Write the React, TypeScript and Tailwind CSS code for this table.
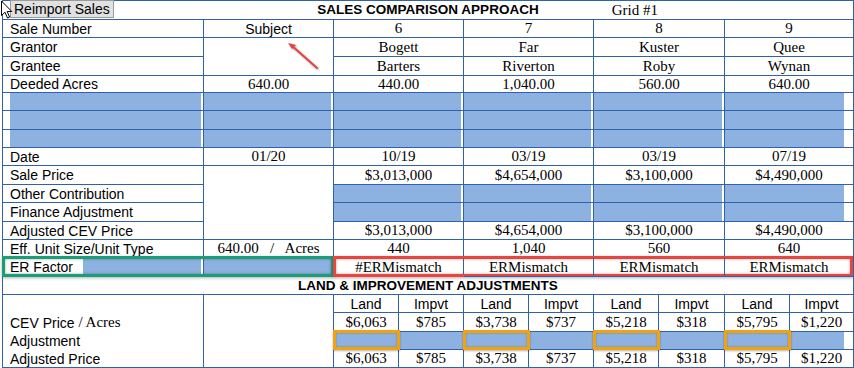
import React from 'react';

const arial = "font-['Liberation_Sans',Arial,sans-serif]";
const times = "font-['Liberation_Serif','Times_New_Roman',serif]";
const line = 'border-[#3062ab]';
const fill = 'bg-[#8db1e0]';

type Comp = {
    n: string; grantor: string; grantee: string; acres: string; date: string;
    price: string; eff: string; er: string; land: string; impvt: string;
};

const comps: Comp[] = [
    { n: '6', grantor: 'Bogett', grantee: 'Barters', acres: '440.00', date: '10/19', price: '$3,013,000', eff: '440', er: '#ERMismatch', land: '$6,063', impvt: '$785' },
    { n: '7', grantor: 'Far', grantee: 'Riverton', acres: '1,040.00', date: '03/19', price: '$4,654,000', eff: '1,040', er: 'ERMismatch', land: '$3,738', impvt: '$737' },
    { n: '8', grantor: 'Kuster', grantee: 'Roby', acres: '560.00', date: '03/19', price: '$3,100,000', eff: '560', er: 'ERMismatch', land: '$5,218', impvt: '$318' },
    { n: '9', grantor: 'Quee', grantee: 'Wynan', acres: '640.00', date: '07/19', price: '$4,490,000', eff: '640', er: 'ERMismatch', land: '$5,795', impvt: '$1,220' },
];

const Label = ({ children, bottom = true }: { children?: React.ReactNode; bottom?: boolean }) => (
    <div className={`border-r ${bottom ? 'border-b' : ''} ${line} flex items-center pl-[7px] text-[14px] leading-none ${arial}`}>
        {children}
    </div>
);

const Val = ({ children, span = 'col-span-2', sans = false }: { children?: React.ReactNode; span?: string; sans?: boolean }) => (
    <div className={`${span} border-r border-b ${line} flex items-center justify-center leading-none ${sans ? `text-[14px] ${arial}` : `text-[15px] ${times}`}`}>
        {children}
    </div>
);

const Blue = ({ span = 'col-span-2', inset = 'mr-[2px]' }: { span?: string; inset?: string }) => (
    <div className={`${span} border-r border-b ${line} flex`}>
        <div className={`flex-1 ${fill} ${inset}`} />
    </div>
);

const CompRow = ({ pick }: { pick: (c: Comp) => string }) => (
    <>
        {comps.map((c) => (
            <Val key={c.n}>{pick(c)}</Val>
        ))}
    </>
);

const BlueComps = () => (
    <>
        {comps.map((c, i) => (
            <Blue key={c.n} inset={i === 3 ? 'mr-[9px]' : 'mr-[2px]'} />
        ))}
    </>
);

function BlueRow() {
    return (
        <>
            <div className={`border-r border-b ${line} flex`}>
                <div className={`flex-1 ${fill} ml-[7px] mr-[2px]`} />
            </div>
            <Blue span="" />
            <BlueComps />
        </>
    );
}

export default function App() {
    return (
        <div className="relative w-[854px] h-[368px] bg-white overflow-hidden text-black">
            <div className={`ml-[2px] w-fit border-l border-t ${line} grid grid-cols-[201px_130px_65px_65px_65px_65px_65px_66px_65px_64px] grid-rows-[19px_18px_19px_19px_17px_18px_19px_18px_18px_19px_18px_19px_18px_18px_19px_18px_18px_19px_18px_18px]`}>
                {/* title row */}
                <div className={`col-span-10 border-r border-b ${line} grid grid-cols-[1fr_auto_1fr] items-center`}>
                    <div className="flex pl-[7px]">
                        <button className={`-mt-[2px] h-[18px] px-[3px] bg-[#e1e1e1] border border-[#9a9a9a] text-[14px] leading-none ${arial}`}>
                            Reimport Sales
                        </button>
                    </div>
                    <div className={`text-[13.5px] font-bold leading-none ${arial}`}>SALES COMPARISON APPROACH</div>
                    <div className={`pl-[73px] text-[15px] leading-none ${times}`}>Grid #1</div>
                </div>

                <Label>Sale Number</Label>
                <Val span="" sans>Subject</Val>
                <CompRow pick={(c) => c.n} />

                <Label>Grantor</Label>
                <div className={`row-span-2 border-r border-b ${line}`} />
                <CompRow pick={(c) => c.grantor} />

                <Label>Grantee</Label>
                <CompRow pick={(c) => c.grantee} />

                <Label>Deeded Acres</Label>
                <Val span="">640.00</Val>
                <CompRow pick={(c) => c.acres} />

                <BlueRow />
                <BlueRow />
                <BlueRow />

                <Label>Date</Label>
                <Val span="">01/20</Val>
                <CompRow pick={(c) => c.date} />

                <Label>Sale Price</Label>
                <div className={`row-span-4 border-r border-b ${line}`} />
                <CompRow pick={(c) => c.price} />

                <Label>Other Contribution</Label>
                <BlueComps />

                <Label>Finance Adjustment</Label>
                <BlueComps />

                <Label>Adjusted CEV Price</Label>
                <CompRow pick={(c) => c.price} />

                <Label>Eff. Unit Size/Unit Type</Label>
                <Val span="">
                    <span className="whitespace-pre">640.00   /   Acres</span>
                </Val>
                <CompRow pick={(c) => c.eff} />

                {/* ER factor row */}
                <div className={`relative border-r border-b ${line} flex`}>
                    <span className={`w-[80px] pl-[7px] self-center text-[14px] leading-none ${arial}`}>ER Factor</span>
                    <div className={`flex-1 ${fill} mr-[2px]`} />
                    <div className="absolute -left-px -top-[2px] w-[332px] h-[21px] border-[3px] border-[#1a9e78] shadow-[inset_0_0_3px_rgba(0,0,0,0.35),0_1px_3px_rgba(0,0,0,0.3)] pointer-events-none" />
                </div>
                <Blue span="" />
                {comps.map((c, i) => (
                    <div key={c.n} className={`relative col-span-2 border-r border-b ${line} flex items-center justify-center text-[15px] leading-none ${times}`}>
                        {c.er}
                        {i === 0 && (
                            <div className="absolute -left-px -top-[2px] w-[520px] h-[21px] border-[3px] border-[#e8453f] shadow-[inset_0_0_3px_rgba(0,0,0,0.35),0_1px_3px_rgba(0,0,0,0.3)] pointer-events-none" />
                        )}
                    </div>
                ))}

                <div className={`col-span-10 border-r border-b ${line} flex items-center justify-center text-[13.5px] font-bold leading-none ${arial}`}>
                    LAND &amp; IMPROVEMENT ADJUSTMENTS
                </div>

                {/* land & improvement */}
                <Label bottom={false} />
                <div className={`row-span-4 border-r border-b ${line}`} />
                {comps.map((c) => (
                    <React.Fragment key={c.n}>
                        <Val span="" sans>Land</Val>
                        <Val span="" sans>Impvt</Val>
                    </React.Fragment>
                ))}

                <Label bottom={false}>
                    CEV Price&nbsp;<span className={`text-[15px] ${times}`}>/ Acres</span>
                </Label>
                {comps.map((c) => (
                    <React.Fragment key={c.n}>
                        <Val span="">{c.land}</Val>
                        <Val span="">{c.impvt}</Val>
                    </React.Fragment>
                ))}

                <Label bottom={false}>Adjustment</Label>
                {comps.map((c, i) => (
                    <React.Fragment key={c.n}>
                        <div className={`relative border-b ${line} ${fill}`}>
                            <div className="absolute -left-px -top-[2px] -right-px -bottom-px border-[3px] border-[#f2a20c] shadow-[inset_0_0_2px_rgba(0,0,0,0.3),0_1px_2px_rgba(0,0,0,0.3)]" />
                        </div>
                        <div className={`border-b ${line} ${i === 3 ? 'border-r flex' : fill}`}>
                            {i === 3 && <div className={`flex-1 ${fill} mr-[9px]`} />}
                        </div>
                    </React.Fragment>
                ))}

                <Label>Adjusted Price</Label>
                {comps.map((c) => (
                    <React.Fragment key={c.n}>
                        <Val span="">{c.land}</Val>
                        <Val span="">{c.impvt}</Val>
                    </React.Fragment>
                ))}
            </div>

            {/* red annotation arrow */}
            <svg className="absolute left-[280px] top-[36px] pointer-events-none" width="46" height="40" viewBox="0 0 46 40">
                <g filter="drop-shadow(1px 1px 1px rgba(0,0,0,0.35))">
                    <line x1="37" y1="32" x2="11" y2="9" stroke="#e5433f" strokeWidth="2" strokeLinecap="round" />
                    <path d="M8 7 L16 9 L12 13 Z" fill="#e5433f" />
                </g>
            </svg>

            {/* mouse cursor */}
            <svg className="absolute left-0 top-0 pointer-events-none" width="14" height="20" viewBox="0 0 14 20">
                <path d="M1.5 1 L1.5 15.5 L5 12.2 L7.5 18 L9.6 17.1 L7.2 11.5 L11.8 11.5 Z" fill="#fff" stroke="#000" strokeWidth="1" strokeLinejoin="miter" />
            </svg>
        </div>
    );
}
